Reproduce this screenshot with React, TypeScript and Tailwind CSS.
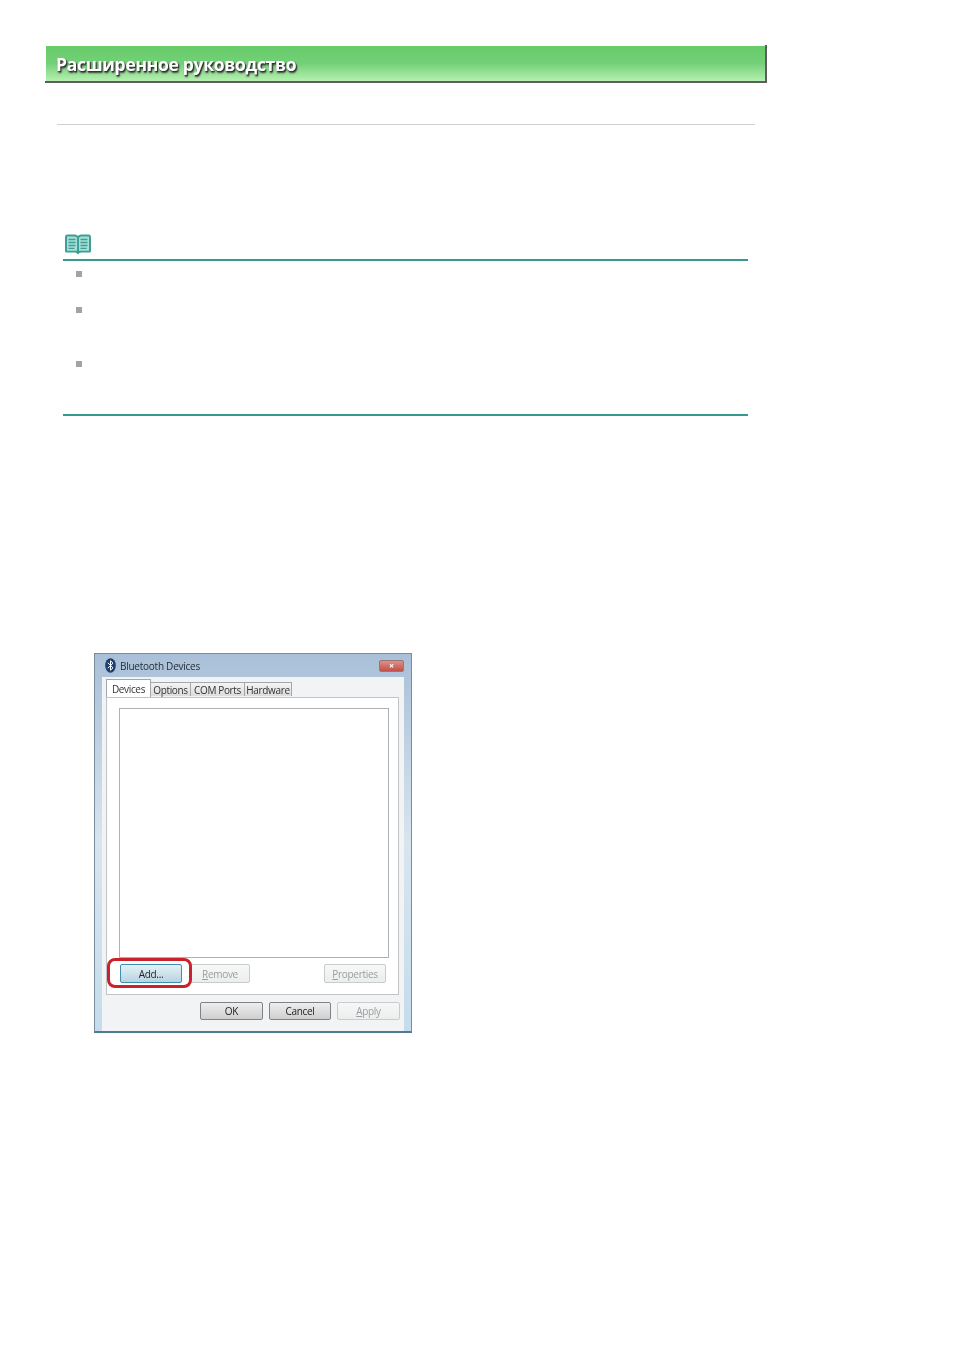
import React from 'react';

const font = { fontFamily: '"Open Sans", "Liberation Sans", sans-serif' };

const DialogButton: React.FC<{ label: string; hot?: string; disabled?: boolean; focused?: boolean; className?: string }> = ({ label, hot, disabled, focused, className = '' }) => {
  let look = 'border-[#7f8383] from-[#eeeeee] to-[#cfcfcf] text-[#222222]';
  if (disabled) look = 'border-[#c8cccc] from-[#f6f7f7] to-[#eceeee] text-[#9a9e9e]';
  if (focused) look = 'border-[#3f8db0] from-[#e4f1f7] to-[#b8d4e2] text-[#222222]';

  return (
    <div className={`flex items-center justify-center rounded-[2px] border bg-gradient-to-b text-[10px] leading-none tracking-[-0.3px] ${look} ${className}`}>
      {hot && <span className="underline">{hot}</span>}
      {label}
    </div>
  );
};

const NoteBullet: React.FC<{ className?: string }> = ({ className = '' }) => (
  <div className={`ml-[13px] h-[6px] w-[6px] bg-[#a3a3a3] ${className}`} />
);

const BookIcon = () => (
  <svg width="28" height="21" viewBox="0 0 28 21" className="block">
    <path d="M1 3 Q1 0.5 3 0.5 H11 Q13 0.5 14 2 Q15 0.5 17 0.5 H25 Q27 0.5 27 3 V17 Q27 18.5 25.5 18.5 H17 L15.5 19 L14 20.5 L12.5 19 L11 18.5 H2.5 Q1 18.5 1 17 Z" fill="#3a9f98" />
    <path d="M3 2.5 H11 Q12.8 2.5 13 4 V16.8 H3 Z M25 2.5 H17 Q15.2 2.5 15 4 V16.8 H25 Z" fill="#a9ded6" />
    <path d="M4.5 5.5 H11.5 M4.5 8.5 H11.5 M4.5 11.5 H11.5 M4.5 14.4 H10.5 M16.5 5.5 H23.5 M16.5 8.5 H23.5 M16.5 11.5 H23.5 M16.5 14.4 H22.5" stroke="#3f9f98" strokeWidth="1.4" fill="none" />
  </svg>
);

const BluetoothIcon = () => (
  <svg width="11" height="15" viewBox="0 0 11 15" className="block">
    <ellipse cx="5.5" cy="7.5" rx="5.3" ry="7.3" fill="#1f3f6e" />
    <path d="M2.8 4.8 L8 9.8 L5.5 12.2 V2.8 L8 5.2 L2.8 10.2" stroke="#ffffff" strokeWidth="1" fill="none" />
  </svg>
);

const Tab: React.FC<{ label: string; className: string }> = ({ label, className }) => (
  <div className={`flex items-center justify-center border border-b-0 border-[#a4a8aa] text-[10px] leading-none tracking-[-0.35px] text-[#333333] ${className}`}>
    {label}
  </div>
);

const BluetoothDialog = () => (
  <div className="ml-[94px] mt-[237px] flex h-[380px] w-[318px] flex-col border border-[#7d8c9a] border-b-[2px] border-b-[#4f7a90] bg-gradient-to-b from-[#a9c0d8] via-[#d8e5ef] to-[#c4dcec] px-[1px] blur-[0.6px]" style={font}>
    <div className="flex h-[23px] shrink-0 items-center px-[9px]">
      <BluetoothIcon />
      <span className="ml-[4px] text-[10px] leading-none tracking-[-0.25px] text-[#262e38]">Bluetooth Devices</span>
      <div className="ml-auto mr-[-3px] flex h-[12px] w-[25px] items-center justify-center rounded-[2px] border border-[#9c7474] bg-gradient-to-b from-[#dc8f86] to-[#c24f47] text-[9px] font-bold leading-none text-white">×</div>
    </div>
    <div className="mx-[6px] flex min-h-0 flex-1 flex-col bg-[#f1f3f4] pb-[9px] pl-[4px] pr-[5px]">
      <div className="flex h-[20px] shrink-0 items-end">
        <Tab label="Devices" className="h-[18px] w-[45px] bg-white" />
        <Tab label="Options" className="mb-px h-[14px] w-[40px] border-l-0 bg-gradient-to-b from-[#f4f4f4] to-[#dcdcdc]" />
        <Tab label="COM Ports" className="mb-px h-[14px] w-[54px] border-l-0 bg-gradient-to-b from-[#f4f4f4] to-[#dcdcdc]" />
        <Tab label="Hardware" className="mb-px h-[14px] w-[47px] border-l-0 bg-gradient-to-b from-[#f4f4f4] to-[#dcdcdc]" />
      </div>
      <div className="flex h-[298px] shrink-0 flex-col border border-[#c0c4c6] bg-white pl-[12px] pr-[9px] pt-[10px]">
        <div className="h-[250px] shrink-0 border border-[#aeb2b4] bg-white" />
        <div className="relative mt-[6px] flex items-center">
          <div className="absolute left-[-12px] top-[-6px] h-[30px] w-[85px] rounded-[8px] border-[3px] border-[#c9222c]" />
          <DialogButton label="Add..." focused className="ml-px h-[19px] w-[62px]" />
          <DialogButton label="emove" hot="R" disabled className="ml-[8px] h-[19px] w-[60px]" />
          <DialogButton label="roperties" hot="P" disabled className="ml-auto mr-[3px] h-[19px] w-[62px]" />
        </div>
      </div>
      <div className="mr-[-1px] mt-[7px] flex justify-end gap-[6px]">
        <DialogButton label="OK" className="h-[18px] w-[63px]" />
        <DialogButton label="Cancel" className="h-[18px] w-[62px]" />
        <DialogButton label="pply" hot="A" disabled className="h-[18px] w-[63px]" />
      </div>
    </div>
  </div>
);

export default function App() {
  return (
    <div className="h-[1350px] w-[954px] overflow-hidden bg-white pt-[45px]" style={font}>
      <div className="ml-[45px] flex h-[38px] w-[722px] border-b-[2px] border-r-[2px] border-[#5f5c60] pl-px pt-px">
        <div className="flex flex-1 items-center bg-gradient-to-b from-[#66cb69] via-[#74d078] to-[#b4f0b0] pl-[10px] pt-[2px]">
          <span className="text-[17.5px] font-bold leading-none tracking-[-0.3px] text-white blur-[0.35px] [text-shadow:1px_1px_1px_#2f2f2f,1px_2px_2px_#3a3a3a]">Расширенное руководство</span>
        </div>
      </div>

      <div className="ml-[57px] mt-[41px] h-px w-[698px] bg-[#cfcfcf]" />

      <div className="ml-[63px] mt-[109px] w-[685px]">
        <div className="border-b-[2px] border-[#359a90] pb-[4px] pl-px">
          <BookIcon />
        </div>
        <div className="h-[145px] border-b-[2px] border-[#359a90]">
          <NoteBullet className="mt-[10px]" />
          <NoteBullet className="mt-[30px]" />
          <NoteBullet className="mt-[48px]" />
        </div>
      </div>

      <BluetoothDialog />
    </div>
  );
}
